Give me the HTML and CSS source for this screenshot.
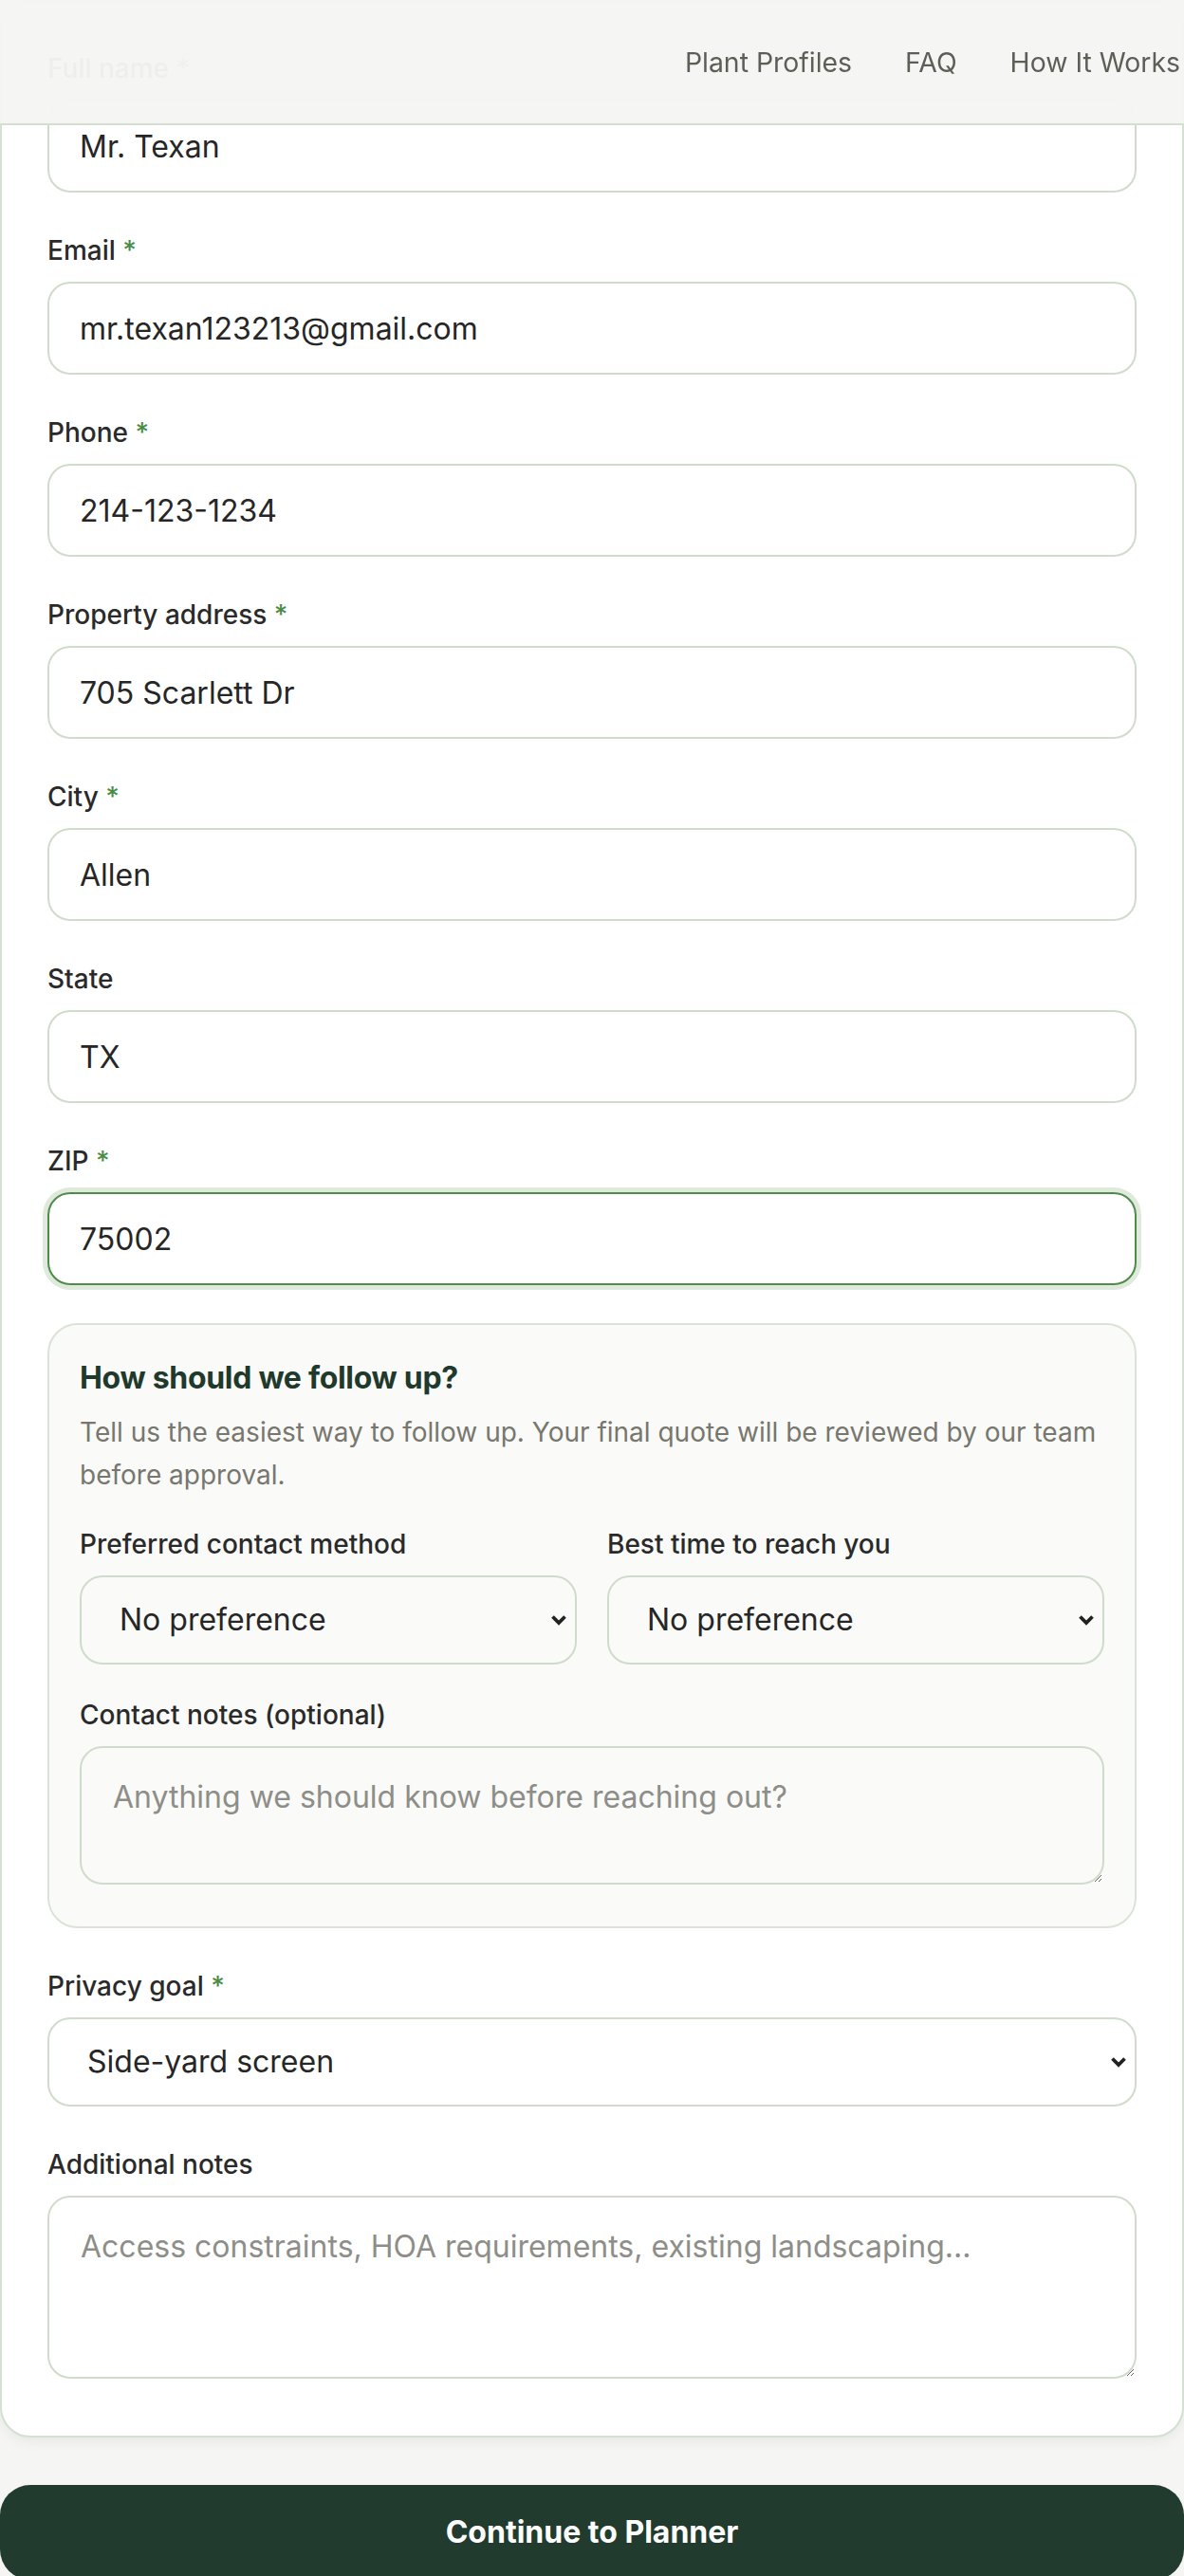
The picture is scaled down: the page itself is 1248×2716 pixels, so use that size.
FILE: index.html
```html
<!DOCTYPE html>
<html lang="en">
<head>
  <meta charset="UTF-8">
  <meta name="viewport" content="width=device-width, initial-scale=1.0">
  <title>Privacy Screen Quote</title>
  <link rel="stylesheet" href="styles.css">
</head>
<body>
  <header class="topbar">
    <nav class="topnav">
      <a href="#">Plant Profiles</a>
      <a href="#">FAQ</a>
      <a href="#">How It Works</a>
    </nav>
  </header>

  <main class="page">
    <form class="card">
      <div class="field">
        <label>Full name <span class="req">*</span></label>
        <input type="text" value="Mr. Texan">
      </div>
      <div class="field">
        <label>Email <span class="req">*</span></label>
        <input type="email" value="mr.texan123213@gmail.com">
      </div>
      <div class="field">
        <label>Phone <span class="req">*</span></label>
        <input type="tel" value="214-123-1234">
      </div>
      <div class="field">
        <label>Property address <span class="req">*</span></label>
        <input type="text" value="705 Scarlett Dr">
      </div>
      <div class="field">
        <label>City <span class="req">*</span></label>
        <input type="text" value="Allen">
      </div>
      <div class="field">
        <label>State</label>
        <input type="text" value="TX">
      </div>
      <div class="field">
        <label>ZIP <span class="req">*</span></label>
        <input type="text" class="is-focused" value="75002">
      </div>

      <section class="followup">
        <h3>How should we follow up?</h3>
        <p>Tell us the easiest way to follow up. Your final quote will be reviewed by our team before approval.</p>
        <div class="followup-grid">
          <div class="field">
            <label>Preferred contact method</label>
            <select>
              <option>No preference</option>
              <option>Phone call</option>
              <option>Text message</option>
              <option>Email</option>
            </select>
          </div>
          <div class="field">
            <label>Best time to reach you</label>
            <select>
              <option>No preference</option>
              <option>Morning</option>
              <option>Afternoon</option>
              <option>Evening</option>
            </select>
          </div>
        </div>
        <div class="field">
          <label>Contact notes (optional)</label>
          <textarea class="short" placeholder="Anything we should know before reaching out?"></textarea>
        </div>
      </section>

      <div class="field">
        <label>Privacy goal <span class="req">*</span></label>
        <select>
          <option>Side-yard screen</option>
          <option>Backyard fence line</option>
          <option>Pool enclosure</option>
        </select>
      </div>
      <div class="field">
        <label>Additional notes</label>
        <textarea class="tall" placeholder="Access constraints, HOA requirements, existing landscaping..."></textarea>
      </div>
    </form>

    <button class="continue" type="button">Continue to Planner</button>
  </main>
</body>
</html>
```

FILE: styles.css
```css
* {
  box-sizing: border-box;
}

body {
  margin: 0;
  padding: 0;
  font-family: Inter, "Noto Sans", sans-serif;
  background-color: #f5f5f3;
  color: #262626;
}

.topbar {
  position: fixed;
  top: 0;
  left: 0;
  right: 0;
  height: 132px;
  background: rgba(245, 245, 243, 0.97);
  border-bottom: 2px solid #d3dfd0;
  display: flex;
  align-items: center;
  justify-content: flex-end;
  padding-right: 4px;
  z-index: 10;
}

.topnav {
  display: flex;
  gap: 56px;
}

.topnav a {
  color: #5e5e59;
  text-decoration: none;
  font-size: 28.4px;
}

.card {
  background: #fff;
  border: 2px solid #d4e0d1;
  border-radius: 32px;
  padding: 49px 48px 60px;
  display: flex;
  flex-direction: column;
  gap: 40px;
  box-shadow: 0 4px 14px rgba(0, 0, 0, 0.06);
}

.field label {
  display: block;
  font-size: 28px;
  font-weight: 500;
  line-height: 42px;
  margin-bottom: 12px;
  color: #2a2a2a;
}

.req {
  color: #4a8c46;
}

input,
select,
textarea {
  display: block;
  width: 100%;
  font-family: inherit;
  font-size: 32px;
  color: #262626;
  background-color: #fff;
  border: 2px solid #cfdccb;
  border-radius: 24px;
  outline: none;
}

input {
  height: 98px;
  padding: 0 32px;
}

input.is-focused {
  border-color: #4f8b4a;
  box-shadow: 0 0 0 5px #dfe9dc;
}

select {
  height: 94px;
  padding: 0 48px 0 40px;
  appearance: none;
  -webkit-appearance: none;
  background-image: url("data:image/svg+xml,%3Csvg xmlns='http://www.w3.org/2000/svg' width='18' height='12' viewBox='0 0 18 12'%3E%3Cpath d='M2.5 2.5 L9 9 L15.5 2.5' fill='none' stroke='%23222' stroke-width='3.8'/%3E%3C/svg%3E");
  background-repeat: no-repeat;
  background-position: right 8px center;
  background-size: 18px 12px;
}

textarea {
  padding: 28px 33px;
  line-height: 1.5;
  resize: vertical;
}

textarea.short {
  height: 146px;
}

textarea.tall {
  height: 193px;
}

::placeholder {
  color: #8e8e89;
}

.followup {
  background: #fafaf8;
  border: 2px solid #dbe3d8;
  border-radius: 32px;
  padding: 35px 32px 44px;
}

.followup h3 {
  margin: 0 0 14px;
  font-size: 32px;
  font-weight: 700;
  line-height: 1.3;
  letter-spacing: -0.3px;
  color: #1f3a2c;
}

.followup p {
  margin: 0 0 29px;
  font-size: 28px;
  line-height: 45px;
  color: #77776f;
}

.followup-grid {
  display: grid;
  grid-template-columns: 1fr 1fr;
  gap: 32px;
  margin-bottom: 32px;
}

.followup select,
.followup textarea {
  background-color: #fafaf8;
}

.continue {
  display: block;
  width: 100%;
  margin-top: 50px;
  height: 100px;
  border: none;
  border-radius: 32px;
  background-color: #213c2f;
  color: #fff;
  font-family: inherit;
  font-size: 32px;
  font-weight: 700;
  cursor: pointer;
}
```
